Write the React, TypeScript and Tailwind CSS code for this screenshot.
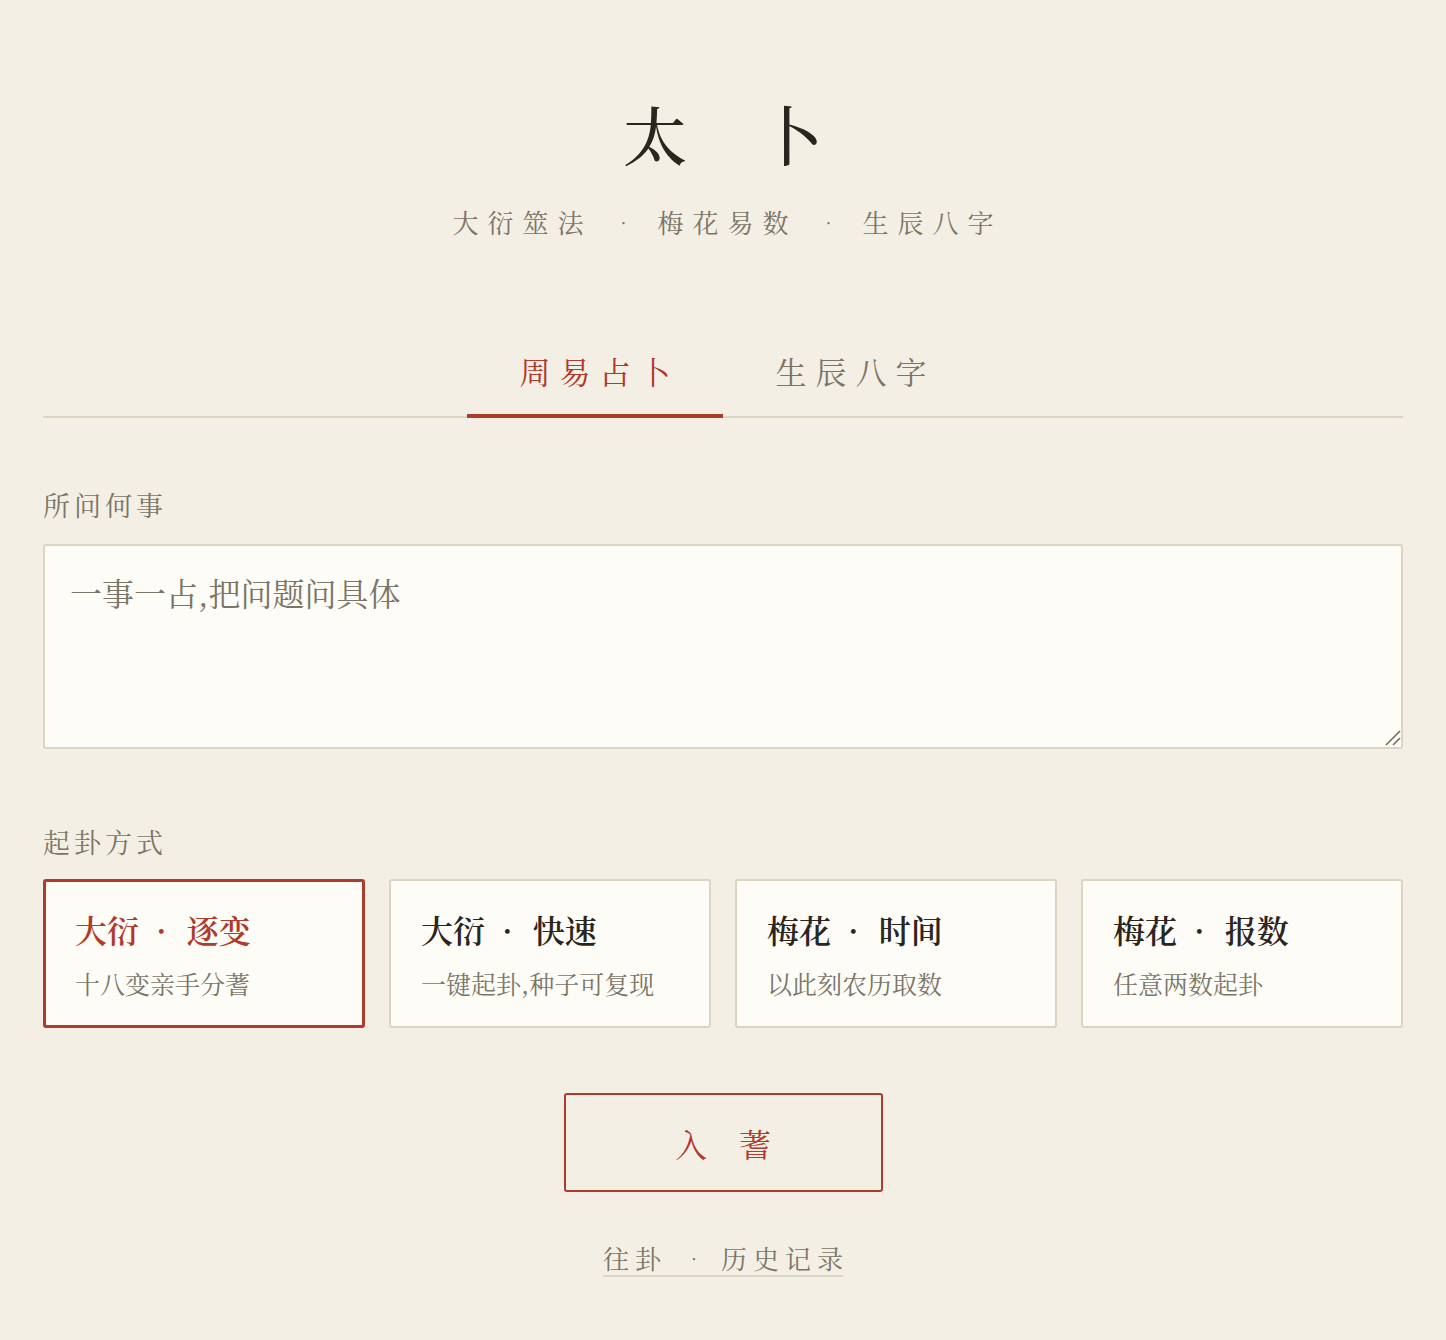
import { useState } from 'react';

const methods = [
  { id: 'dayan-step', a: '大衍', b: '逐变', desc: '十八变亲手分蓍' },
  { id: 'dayan-fast', a: '大衍', b: '快速', desc: '一键起卦,种子可复现' },
  { id: 'meihua-time', a: '梅花', b: '时间', desc: '以此刻农历取数' },
  { id: 'meihua-num', a: '梅花', b: '报数', desc: '任意两数起卦' },
];

const serif = '[font-family:"Noto_Serif_CJK_SC","Noto_Serif_SC","Source_Han_Serif_SC","Liberation_Serif","Noto_Sans_CJK_SC",serif]';

const App = () => {
  const [tab, setTab] = useState<'zhouyi' | 'bazi'>('zhouyi');
  const [method, setMethod] = useState('dayan-step');
  const [question, setQuestion] = useState('');

  return (
    <div className={`min-h-[1340px] bg-[#f4efe4] ${serif}`}>
      <div className="mx-auto max-w-[1360px] pt-[92px] pb-16">
        {/* 标题 */}
        <h1 className="flex justify-center gap-[72px] text-[64px] leading-[80px] font-medium text-[#2a251e]">
          <span>太</span>
          <span>卜</span>
        </h1>
        <div className="mt-[32px] pl-[9px] flex justify-center items-center gap-[28px] text-[26px] leading-[36px] text-[#7b7567]">
          <span className="tracking-[9px]">大衍筮法</span>
          <span className="mr-[3px] text-[18px]">·</span>
          <span className="tracking-[9px]">梅花易数</span>
          <span className="mr-[3px] text-[18px]">·</span>
          <span className="tracking-[9px]">生辰八字</span>
        </div>

        {/* 标签页 */}
        <div className="mt-[108px] flex justify-center border-b-2 border-[#ddd5c3]">
          <button
            onClick={() => setTab('zhouyi')}
            className={`-mb-[2px] w-[256px] pb-[20px] text-[31px] leading-[46px] tracking-[9px] pl-[9px] border-b-4 ${
              tab === 'zhouyi' ? 'border-[#b03a2b] text-[#b03a2b]' : 'border-transparent text-[#7b7567]'
            }`}
          >
            周易占卜
          </button>
          <button
            onClick={() => setTab('bazi')}
            className={`-mb-[2px] w-[256px] pb-[20px] text-[31px] leading-[46px] tracking-[9px] pl-[9px] border-b-4 ${
              tab === 'bazi' ? 'border-[#b03a2b] text-[#b03a2b]' : 'border-transparent text-[#7b7567]'
            }`}
          >
            生辰八字
          </button>
        </div>

        {/* 所问何事 */}
        <div className="mt-[68px] text-[27px] leading-[38px] tracking-[4px] text-[#7b7567]">所问何事</div>
        <div className="relative mt-[20px]">
          <textarea
            value={question}
            onChange={(e) => setQuestion(e.target.value)}
            placeholder="一事一占,把问题问具体"
            className="block w-full h-[205px] rounded-[3px] border-2 border-[#ddd5c3] bg-[#fdfcf6] px-[25px] py-[22px] text-[32px] leading-[48px] text-[#2a251e] placeholder:text-[#7b7567] outline-none resize-y"
          />
          <svg
            className="pointer-events-none absolute bottom-[2px] right-[2px] w-[17px] h-[17px] bg-[#fdfcf6]"
            viewBox="0 0 17 17"
          >
            <line x1="2" y1="15" x2="16" y2="1" stroke="#6f6a60" strokeWidth="1.6" />
            <line x1="9" y1="15" x2="16" y2="8" stroke="#6f6a60" strokeWidth="1.6" />
          </svg>
        </div>

        {/* 起卦方式 */}
        <div className="mt-[74px] text-[27px] leading-[38px] tracking-[4px] text-[#7b7567]">起卦方式</div>
        <div className="mt-[18px] grid grid-cols-4 gap-[24px]">
          {methods.map((m) => {
            const active = m.id === method;
            return (
              <button
                key={m.id}
                onClick={() => setMethod(m.id)}
                className={`flex flex-col items-start justify-start h-[149px] rounded-[3px] bg-[#fdfcf6] text-left ${
                  active ? 'border-[3px] border-[#b03a2b] px-[29px] pt-[24px]' : 'border-2 border-[#ddd5c3] px-[30px] pt-[25px]'
                }`}
              >
                <div className={`flex items-center text-[32px] leading-[46px] font-semibold ${active ? 'text-[#b03a2b]' : 'text-[#2a251e]'}`}>
                  <span>{m.a}</span>
                  <span className="ml-[17px] mr-[20px]">·</span>
                  <span>{m.b}</span>
                </div>
                <div className="mt-[14px] text-[25px] leading-[34px] text-[#7b7567]">{m.desc}</div>
              </button>
            );
          })}
        </div>

        {/* 入蓍 */}
        <div className="mt-[65px] flex justify-center">
          <button className="w-[319px] h-[99px] rounded-[3px] border-2 border-[#b03a2b] text-[32px] tracking-[32px] pl-[32px] text-[#b03a2b]">
            入蓍
          </button>
        </div>

        {/* 往卦 */}
        <div className="mt-[49px] flex justify-center">
          <button className="flex items-center gap-[24px] border-b-2 border-[#ddd5c3] text-[26px] leading-[34px] text-[#7b7567]">
            <span className="tracking-[6px]">往卦</span>
            <span className="text-[18px]">·</span>
            <span className="tracking-[6px] -mr-[6px]">历史记录</span>
          </button>
        </div>
      </div>
    </div>
  );
};

export default App;
